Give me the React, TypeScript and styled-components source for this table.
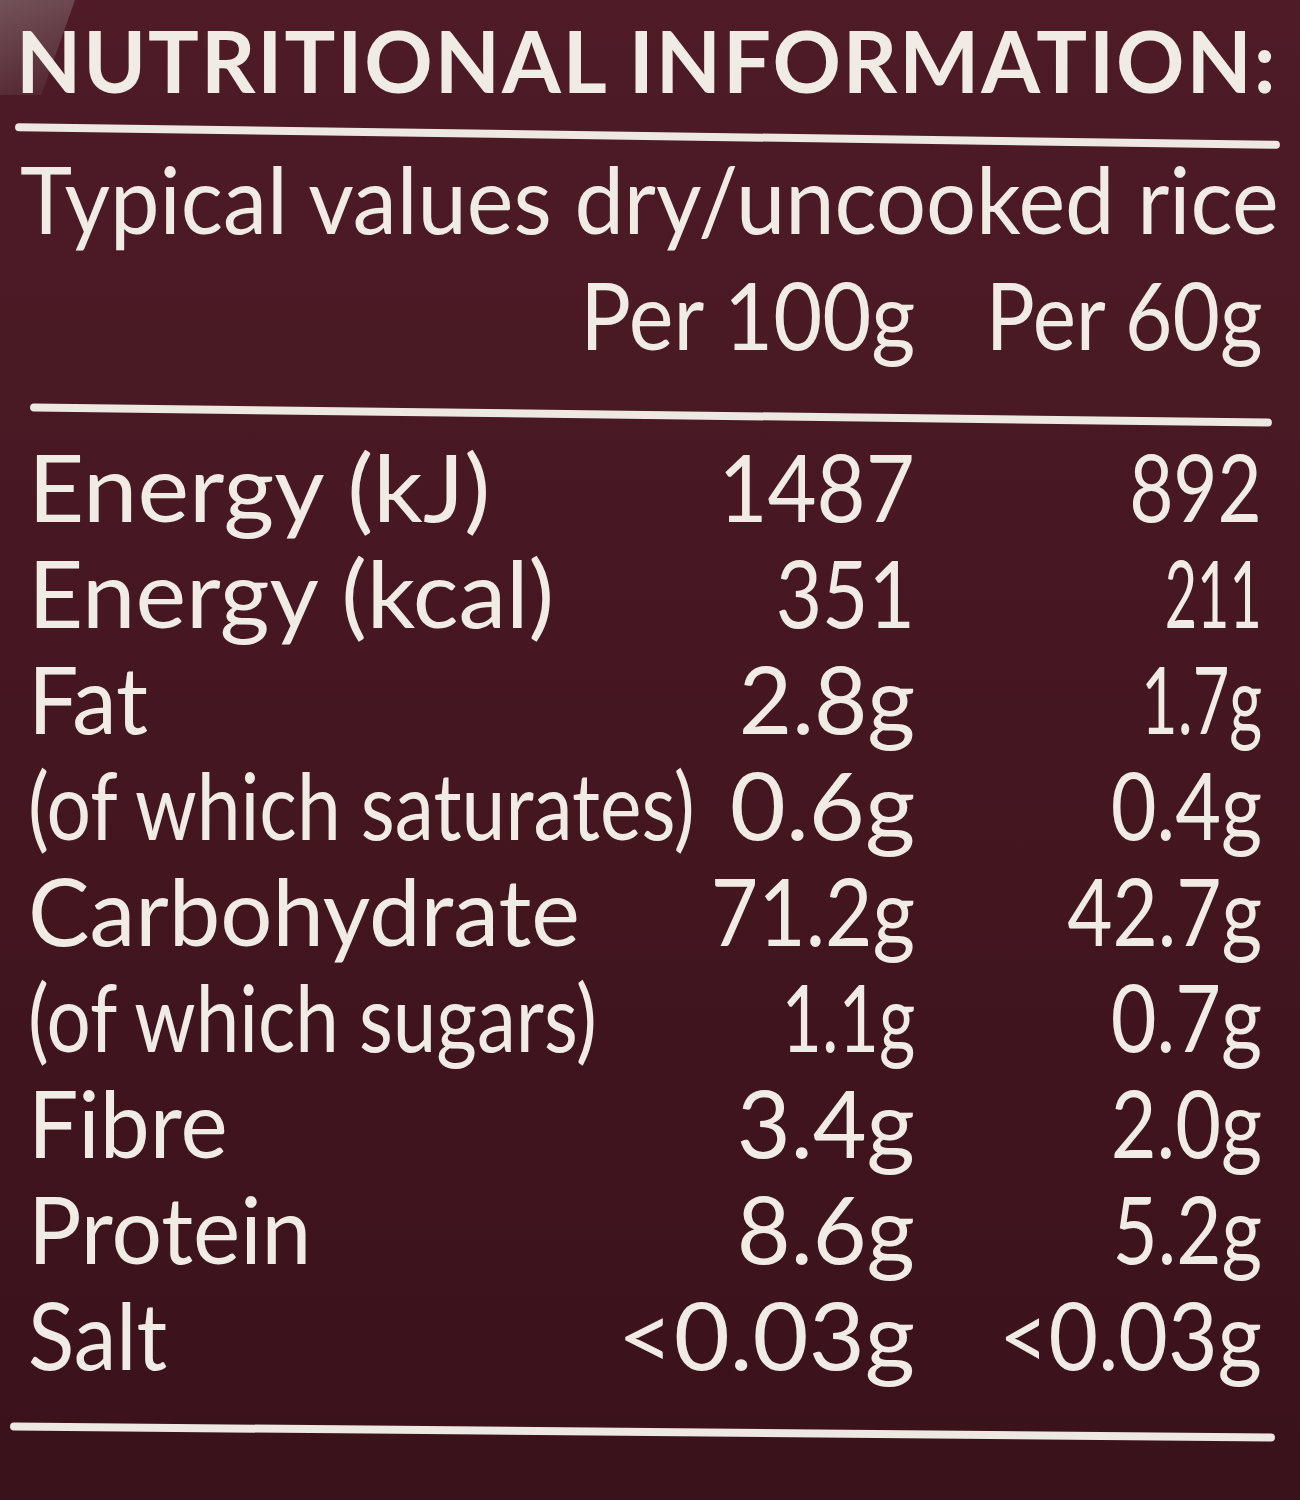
import styled, { createGlobalStyle } from "styled-components";

interface Cell {
  text: string;
  sx: number;
}

interface Nutrient {
  label: Cell;
  per100: Cell;
  per60: Cell;
}

// sx squeezes each printed word to the width it has on the pack
const nutrients: Nutrient[] = [
  {
    label: { text: "Energy (kJ)", sx: 1.05 },
    per100: { text: "1487", sx: 0.91 },
    per60: { text: "892", sx: 0.82 },
  },
  {
    label: { text: "Energy (kcal)", sx: 1.03 },
    per100: { text: "351", sx: 0.86 },
    per60: { text: "211", sx: 0.6 },
  },
  {
    label: { text: "Fat", sx: 0.96 },
    per100: { text: "2.8g", sx: 0.99 },
    per60: { text: "1.7g", sx: 0.68 },
  },
  {
    label: { text: "(of which saturates)", sx: 0.845 },
    per100: { text: "0.6g", sx: 1.04 },
    per60: { text: "0.4g", sx: 0.85 },
  },
  {
    label: { text: "Carbohydrate", sx: 0.99 },
    per100: { text: "71.2g", sx: 0.88 },
    per60: { text: "42.7g", sx: 0.84 },
  },
  {
    label: { text: "(of which sugars)", sx: 0.84 },
    per100: { text: "1.1g", sx: 0.75 },
    per60: { text: "0.7g", sx: 0.85 },
  },
  {
    label: { text: "Fibre", sx: 0.96 },
    per100: { text: "3.4g", sx: 1.0 },
    per60: { text: "2.0g", sx: 0.85 },
  },
  {
    label: { text: "Protein", sx: 0.96 },
    per100: { text: "8.6g", sx: 1.0 },
    per60: { text: "5.2g", sx: 0.84 },
  },
  {
    label: { text: "Salt", sx: 0.92 },
    per100: { text: "<0.03g", sx: 1.04 },
    per60: { text: "<0.03g", sx: 0.92 },
  },
];

function App() {
  return (
    <>
      <GlobalStyle />
      <Sheet>
        <Title>
          <Squeeze $origin="left" $sx={0.985}>
            NUTRITIONAL INFORMATION:
          </Squeeze>
        </Title>
        <Rule $left={15} $right={20} $top={22} $tilt={0.8} />
        <Subtitle>
          <Squeeze $origin="left" $sx={0.95}>
            Typical values dry/uncooked rice
          </Squeeze>
        </Subtitle>
        <HeadRow>
          <span />
          <Value>
            <Squeeze $origin="right" $sx={0.91}>
              Per 100g
            </Squeeze>
          </Value>
          <Value>
            <Squeeze $origin="right" $sx={0.88}>
              Per 60g
            </Squeeze>
          </Value>
        </HeadRow>
        <Rule $left={30} $right={28} $top={47} $tilt={0.7} />
        <Table>
          {nutrients.map((n) => (
            <Row key={n.label.text}>
              <Label>
                <Squeeze $origin="left" $sx={n.label.sx}>
                  {n.label.text}
                </Squeeze>
              </Label>
              <Value>
                <Squeeze $origin="right" $sx={n.per100.sx}>
                  {n.per100.text}
                </Squeeze>
              </Value>
              <Value>
                <Squeeze $origin="right" $sx={n.per60.sx}>
                  {n.per60.text}
                </Squeeze>
              </Value>
            </Row>
          ))}
        </Table>
        <Rule $left={10} $right={25} $top={41} $tilt={0.5} />
      </Sheet>
    </>
  );
}

const GlobalStyle = createGlobalStyle`
  html, body {
    margin: 0;
    padding: 0;
    background: #3a121b;
  }
  body {
    font-family: Lato, "Open Sans", sans-serif;
    color: #f0ebe5;
  }
`;

const Sheet = styled.div`
  position: relative;
  width: 1300px;
  height: 1500px;
  box-sizing: border-box;
  padding: 10px 38px 0 28px;
  overflow: hidden;
  background: linear-gradient(
    180deg,
    #4e1b27 0%,
    #491924 25%,
    #42151f 60%,
    #3a121b 100%
  );
  &::before {
    content: "";
    position: absolute;
    left: 0;
    top: 0;
    width: 75px;
    height: 95px;
    background: linear-gradient(
      160deg,
      rgba(140, 118, 122, 0.6) 0%,
      rgba(120, 95, 100, 0.4) 60%,
      rgba(120, 95, 100, 0.1) 100%
    );
    clip-path: polygon(0 0, 100% 0, 55% 100%, 0 100%);
  }
`;

const Squeeze = styled.span<{ $origin: "left" | "right"; $sx: number }>`
  display: inline-block;
  white-space: nowrap;
  transform: scaleX(${(p) => p.$sx});
  transform-origin: ${(p) => p.$origin} center;
`;

const Title = styled.h1`
  margin: 0 0 0 -12px;
  font-size: 86px;
  line-height: 100px;
  font-weight: 700;
  letter-spacing: 2px;
`;

const Rule = styled.hr<{
  $left: number;
  $right: number;
  $top: number;
  $tilt: number;
}>`
  height: 8px;
  margin: ${(p) => p.$top}px ${(p) => p.$right - 38}px 0 ${(p) => p.$left - 28}px;
  border: none;
  border-radius: 4px;
  background: #eee8e2;
  transform: rotate(${(p) => p.$tilt}deg);
`;

const Subtitle = styled.p`
  margin: 8px 0 0 -8px;
  font-size: 93px;
  line-height: 100px;
`;

const Table = styled.div`
  margin-top: 14px;
  display: flex;
  flex-direction: column;
`;

const Row = styled.div`
  display: grid;
  grid-template-columns: minmax(0, 1fr) 400px 347px;
  font-size: 93px;
  line-height: 106px;
`;

const HeadRow = styled(Row)`
  margin-top: 16px;
  line-height: 100px;
`;

const Label = styled.div`
  white-space: nowrap;
`;

const Value = styled.div`
  text-align: right;
  white-space: nowrap;
`;

export default App;
